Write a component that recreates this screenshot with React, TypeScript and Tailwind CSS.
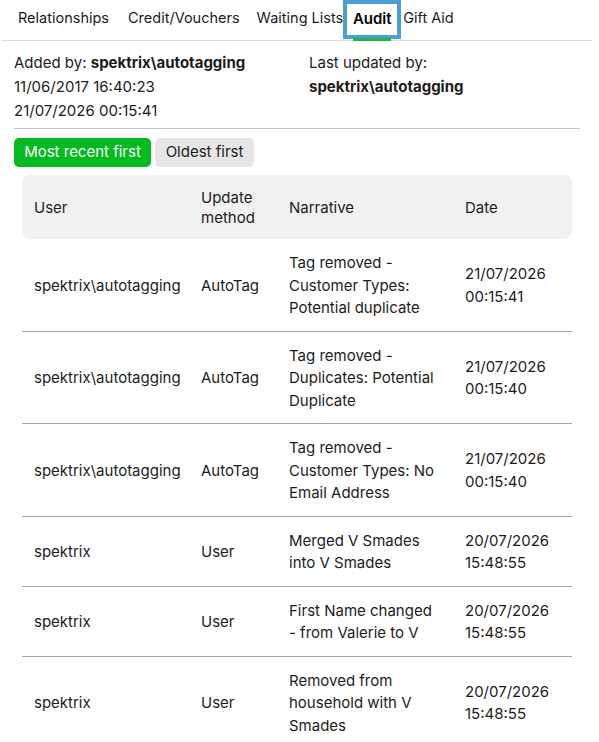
import React from "react";

const rows: { user: string; method: string; narrative: string[]; date: string[] }[] = [
  { user: "spektrix\\autotagging", method: "AutoTag", narrative: ["Tag removed -", "Customer Types:", "Potential duplicate"], date: ["21/07/2026", "00:15:41"] },
  { user: "spektrix\\autotagging", method: "AutoTag", narrative: ["Tag removed -", "Duplicates: Potential", "Duplicate"], date: ["21/07/2026", "00:15:40"] },
  { user: "spektrix\\autotagging", method: "AutoTag", narrative: ["Tag removed -", "Customer Types: No", "Email Address"], date: ["21/07/2026", "00:15:40"] },
  { user: "spektrix", method: "User", narrative: ["Merged V Smades", "into V Smades"], date: ["20/07/2026", "15:48:55"] },
  { user: "spektrix", method: "User", narrative: ["First Name changed", "- from Valerie to V"], date: ["20/07/2026", "15:48:55"] },
  { user: "spektrix", method: "User", narrative: ["Removed from", "household with V", "Smades"], date: ["20/07/2026", "15:48:55"] },
];

export default function App() {
  return (
    <div className="w-[599px] h-[742px] overflow-hidden bg-white text-[15px] text-[#1c1c1c]" style={{ fontFamily: "Inter, 'Noto Sans', sans-serif" }}>
      {/* Tabs */}
      <nav className="mx-[2px] w-[590px] flex pl-[6px] border-b border-[#dcdcdc] h-[41px] text-[14.5px]">
        <div className="px-[10px] h-[40px] flex items-center pb-[4px] whitespace-nowrap">Relationships</div>
        <div className="pl-[9px] pr-[10px] h-[40px] flex items-center pb-[4px] whitespace-nowrap">Credit/Vouchers</div>
        <div className="pl-[7px] pr-[0px] h-[40px] flex items-center pb-[4px] whitespace-nowrap">Waiting Lists</div>
        <div className="relative h-[39px] w-[58px] border-4 border-[#4c9fd4] flex items-center justify-center whitespace-nowrap font-semibold text-black text-[15px]">
          Audit
          <span className="absolute left-[6px] right-[6px] bottom-[-6px] h-[3px] bg-[#1db64a]" />
        </div>
        <div className="px-[2px] h-[40px] flex items-center pb-[4px] whitespace-nowrap">Gift Aid</div>
      </nav>

      {/* Info */}
      <div className="px-[14px] pt-[10px] flex leading-[24px]">
        <div className="w-[295px]">
          <div>Added by: <span className="font-bold">spektrix\autotagging</span></div>
          <div>11/06/2017 16:40:23</div>
          <div>21/07/2026 00:15:41</div>
        </div>
        <div>
          <div>Last updated by:</div>
          <div className="font-bold">spektrix\autotagging</div>
        </div>
      </div>
      <div className="mx-[14px] mt-[5px] w-[566px] h-[1px] bg-[#c4c4c4]" />

      {/* Sort buttons */}
      <div className="px-[14px] mt-[9px] flex gap-[4px]">
        <button className="h-[29px] w-[137px] rounded-[5px] bg-[#03bb1f] text-white flex items-center justify-center">Most recent first</button>
        <button className="h-[29px] w-[99px] rounded-[5px] bg-[#e6e6e6] text-[#1c1c1c] flex items-center justify-center">Oldest first</button>
      </div>

      {/* Table */}
      <div className="ml-[22px] mt-[8px] w-[550px]">
        <div className="grid grid-cols-[167px_88px_176px_119px] bg-[#f1f1f1] rounded-[8px] h-[64px] items-center leading-[20px] pt-[2px]">
          <div className="px-[12px]">User</div>
          <div className="px-[12px]">Update<br />method</div>
          <div className="px-[12px]">Narrative</div>
          <div className="px-[12px]">Date</div>
        </div>
        {rows.map((r, i) => (
          <div key={i} className={`grid grid-cols-[167px_88px_176px_119px] items-center pt-[13px] pb-[11px] leading-[22.5px] ${i < rows.length - 1 ? "border-b border-[#a6a6a6]" : ""}`}>
            <div className="px-[12px] whitespace-nowrap">{r.user}</div>
            <div className="px-[12px]">{r.method}</div>
            <div className="px-[12px] whitespace-nowrap">
              {r.narrative.map((l, j) => (
                <div key={j}>{l}</div>
              ))}
            </div>
            <div className="px-[12px] whitespace-nowrap">
              {r.date.map((l, j) => (
                <div key={j}>{l}</div>
              ))}
            </div>
          </div>
        ))}
      </div>
    </div>
  );
}
